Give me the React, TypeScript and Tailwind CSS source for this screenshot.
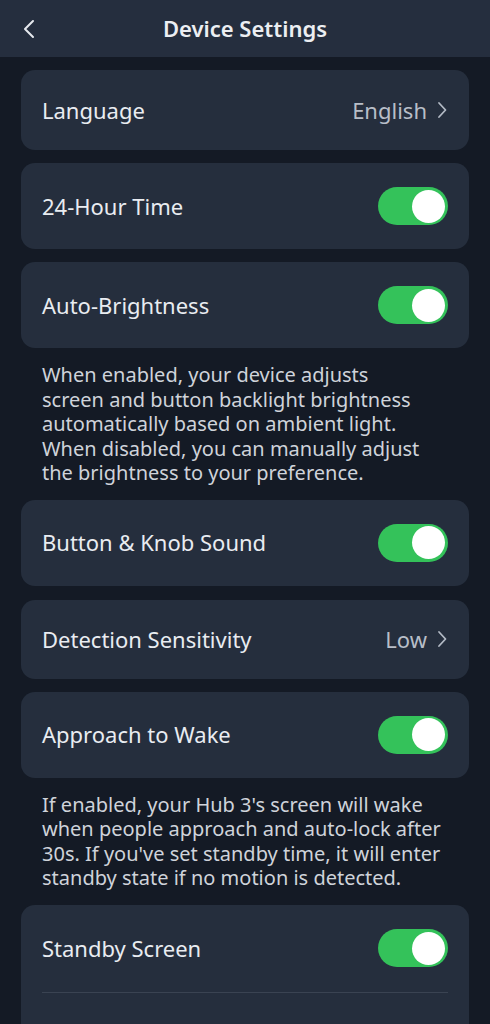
import React from "react";

const Toggle = () => (
  <div className="flex h-[38px] w-[70px] items-center justify-end rounded-full bg-[#34c25a] pr-[3px]">
    <div className="h-[33px] w-[33px] rounded-full bg-white" />
  </div>
);

const Chevron = () => (
  <svg width="10" height="18" viewBox="0 0 10 18" fill="none" className="ml-[10px]">
    <path d="M2 2l6.5 7L2 16" stroke="#b3bac5" strokeWidth="1.8" strokeLinecap="round" strokeLinejoin="round" />
  </svg>
);

const ToggleRow = ({ label }: { label: string }) => (
  <div className="flex h-[86px] items-center justify-between rounded-[14px] bg-[#252e3d] pl-[21px] pr-[21px]">
    <span className="text-[22px] text-[#e9ecf1]">{label}</span>
    <Toggle />
  </div>
);

const ValueRow = ({ label, value, h }: { label: string; value: string; h: string }) => (
  <div className={`flex ${h} items-center justify-between rounded-[14px] bg-[#252e3d] pl-[21px] pr-[22px]`}>
    <span className="text-[22px] text-[#e9ecf1]">{label}</span>
    <span className="flex items-center text-[22px] text-[#b8bec8]">
      {value}
      <Chevron />
    </span>
  </div>
);

const Desc = ({ lines }: { lines: string[] }) => (
  <div className="px-[42px] pt-[15px] pb-[14px] text-[20px] leading-[24.5px] text-[#cfd3da]">
    {lines.map((l, i) => (
      <div key={i} className="whitespace-nowrap">{l}</div>
    ))}
  </div>
);

export default function App() {
  return (
    <div
      className="h-[1024px] w-[490px] overflow-hidden bg-[#141a25]"
      style={{ fontFamily: '"Noto Sans", "Open Sans", sans-serif' }}
    >
      <div className="relative flex h-[57px] items-center justify-center bg-[#252e3e]">
        <svg width="14" height="20" viewBox="0 0 14 20" fill="none" className="absolute left-[22px] top-[19px]">
          <path d="M11 2L3 10l8 8" stroke="#e6e9ee" strokeWidth="2" strokeLinecap="round" strokeLinejoin="round" />
        </svg>
        <span className="text-[22px] font-semibold text-[#eceef2]">Device Settings</span>
      </div>
      <div className="px-[21px] pt-[13px]">
        <ValueRow label="Language" value="English" h="h-[80px]" />
        <div className="mt-[13px]">
          <ToggleRow label="24-Hour Time" />
        </div>
        <div className="mt-[13px]">
          <ToggleRow label="Auto-Brightness" />
        </div>
      </div>
      <Desc
        lines={[
          "When enabled, your device adjusts",
          "screen and button backlight brightness",
          "automatically based on ambient light.",
          "When disabled, you can manually adjust",
          "the brightness to your preference.",
        ]}
      />
      <div className="px-[21px]">
        <ToggleRow label="Button & Knob Sound" />
        <div className="mt-[14px]">
          <ValueRow label="Detection Sensitivity" value="Low" h="h-[79px]" />
        </div>
        <div className="mt-[13px]">
          <ToggleRow label="Approach to Wake" />
        </div>
      </div>
      <Desc
        lines={[
          "If enabled, your Hub 3's screen will wake",
          "when people approach and auto-lock after",
          "30s. If you've set standby time, it will enter",
          "standby state if no motion is detected.",
        ]}
      />
      <div className="px-[21px]">
        <div className="rounded-[14px] bg-[#252e3d]">
          <div className="flex h-[87px] items-center justify-between px-[21px]">
            <span className="text-[22px] text-[#e9ecf1]">Standby Screen</span>
            <Toggle />
          </div>
          <div className="mx-[21px] h-px bg-[#3a4352]" />
          <div className="h-[80px]" />
        </div>
      </div>
    </div>
  );
}
